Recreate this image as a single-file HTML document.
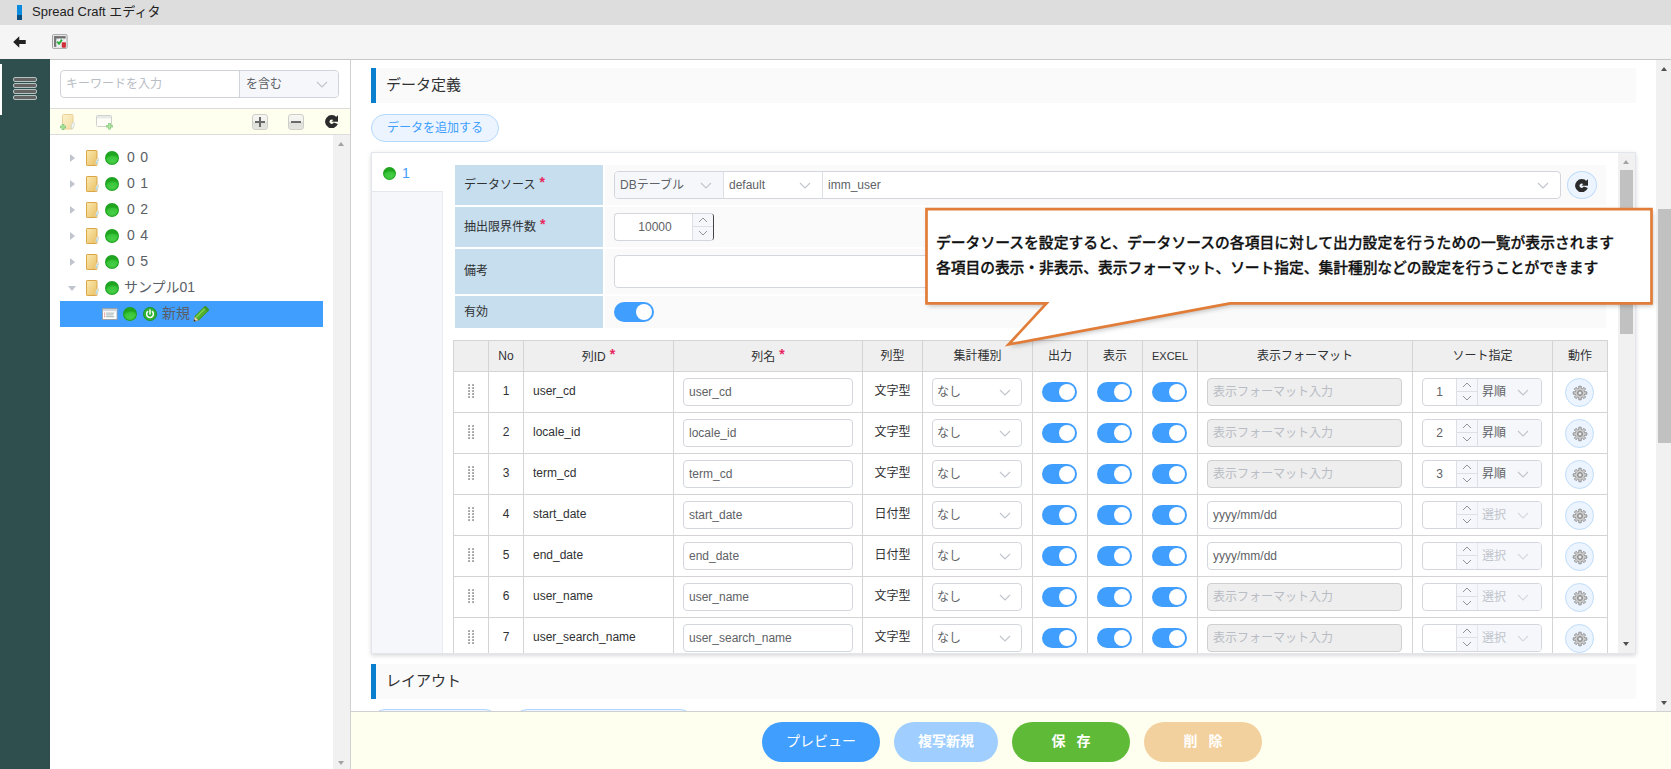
<!DOCTYPE html>
<html lang="ja">
<head>
<meta charset="utf-8">
<title>Spread Craft エディタ</title>
<style>
*{box-sizing:border-box;margin:0;padding:0}
html,body{width:1671px;height:769px;overflow:hidden;background:#fff}
body{position:relative;font-family:"Liberation Sans","Noto Sans CJK JP",sans-serif;font-size:12px;color:#333}
.abs{position:absolute}
#titlebar{position:absolute;left:0;top:0;width:1671px;height:25px;background:#dddddd}
#titlebar .mark{position:absolute;left:17px;top:5px;width:5px;height:15px;background:linear-gradient(#0a8be0 0,#0a8be0 66%,#0b4f7e 66%,#0b4f7e 100%)}
#titlebar .ttl{position:absolute;left:32px;top:0;height:25px;line-height:23px;font-size:13px;color:#222;white-space:nowrap}
#toolbar{position:absolute;left:0;top:25px;width:1671px;height:35px;background:#f5f5f5;border-bottom:1px solid #c6c6c6}
#sidebar{position:absolute;left:0;top:59px;width:50px;height:710px;background:#2f4f4f}
#sidebar .act{position:absolute;left:0;top:5px;width:2px;height:51px;background:#fff}
#sidebar .bar{position:absolute;left:13px;width:24px;height:5px;border:1px solid #b5c2c2;border-radius:2px;background:#636363}
#left{position:absolute;left:50px;top:60px;width:301px;height:709px;background:#fff;border-right:1px solid #d0d0d0}
#main{position:absolute;left:351px;top:60px;width:1320px;height:709px;background:#fff;overflow:hidden}

#search{position:absolute;left:10px;top:10px;width:279px;height:28px;border:1px solid #d0d3d9;border-radius:4px;background:#fff;overflow:hidden}
#search .ph{position:absolute;left:5px;top:0;line-height:27px;font-size:12px;color:#b9bdc5;white-space:nowrap}
#search .sel{position:absolute;left:178px;top:0;width:100px;height:26px;background:#f5f7fa;border-left:1px solid #d0d3d9;line-height:27px;font-size:12px;color:#606266;padding-left:6px}
.chev{position:absolute;width:12px;height:7px}
#ttool{position:absolute;left:0;top:48px;width:300px;height:27px;background:#fffff0;border-top:1px solid #dcdcdc;border-bottom:1px solid #dcdcdc}
.sqbtn{position:absolute;top:5px;width:16px;height:16px;border:1px solid #cfcfc8;border-radius:3px;background:linear-gradient(#f6f6f2 0,#f0f0ec 50%,#dededa 51%,#e4e4e0 100%)}
.sqbtn i{position:absolute;background:#6a6a6a}
#tree{position:absolute;left:0;top:76px;width:283px;height:634px;background:#fff}
#tscroll{position:absolute;left:283px;top:75px;width:17px;height:634px;background:#f1f1f1}
.tri-up{position:absolute;width:0;height:0;border-left:3.5px solid transparent;border-right:3.5px solid transparent;border-bottom:4px solid #a3a3a3}
.tri-dn{position:absolute;width:0;height:0;border-left:3.5px solid transparent;border-right:3.5px solid transparent;border-top:4px solid #a3a3a3}
.trow{position:absolute;left:0;width:283px;height:26px;line-height:25px;font-size:14px;color:#5a5e66;white-space:nowrap}
.trow .arr{position:absolute;left:20px;top:9px;width:0;height:0;border-top:4px solid transparent;border-bottom:4px solid transparent;border-left:5px solid #c0c4cc}
.trow .arrd{position:absolute;left:18px;top:11px;width:0;height:0;border-left:4px solid transparent;border-right:4px solid transparent;border-top:5px solid #c0c4cc}
.trow .fold{position:absolute;left:36px;top:5px;width:13px;height:16px}
.gdot{position:absolute;width:14px;height:14px;border-radius:50%;background:radial-gradient(ellipse 62% 42% at 56% 70%,#48cf48 0,#38c438 70%,rgba(56,196,56,0) 100%),#1fa61f;box-shadow:inset 0 0 0 1px #1f9f1f}
.trow .gdot{left:55px;top:6px}
.trow .lbl{position:absolute;left:77px;top:0}
#mo{position:absolute;left:-351px;top:-60px;width:1671px;height:769px}
/*MAINCSS*/
.sec{position:absolute;left:371px;width:1265px;height:35px;background:#fafafa;border-left:5px solid #0a7fce;padding-left:10px;line-height:34px;font-size:15px;color:#303133}
.pill{position:absolute;height:28px;border:1px solid #b3d8ff;border-radius:14px;background:#ecf5ff;color:#409eff;font-size:12px;line-height:26px;text-align:center;white-space:nowrap}
#card{position:absolute;left:371px;top:152px;width:1265px;height:502px;background:#fff;border:1px solid #e2e5eb;box-shadow:0 2px 4px 0 rgba(0,0,0,.12),0 0 6px 0 rgba(0,0,0,.04);overflow:hidden}
#ci{position:absolute;left:-372px;top:-153px;width:1671px;height:769px}
#tabcol{position:absolute;left:372px;top:153px;width:71px;height:500px;background:#f5f7fa;border-right:1px solid #e9ebf0}
#tab1{position:absolute;left:372px;top:153px;width:71px;height:39px;background:#fff;border-bottom:1px solid #e4e7ed;color:#409eff;font-size:14px;line-height:40px}
.flab{position:absolute;left:455px;width:148px;background:#c6deed;color:#303133;font-size:12px;padding-left:9px;white-space:nowrap}
.fval{position:absolute;left:605px;width:1001px;background:#fafafa}
.req{color:#e8265e;font-size:14px;font-weight:bold;position:relative;top:-2px;margin-left:4px}
.inp{position:absolute;height:28px;border:1px solid #d3d6dc;border-radius:4px;background:#fff;color:#606266;font-size:12px;line-height:26px;padding-left:6px;white-space:nowrap;overflow:hidden}
.inp.dis{background:#eeeeee;border-color:#cfcfcf;color:#b9bcc4}
.sw{position:absolute;height:20px;border-radius:10px;background:#409eff}
.sw:after{content:"";position:absolute;right:2px;top:2px;width:16px;height:16px;border-radius:50%;background:#fff}
.cv{position:absolute;width:12px;height:7px}
.spin{position:absolute;top:0;right:0;width:21px;height:26px;background:#f5f7fa;border-left:1px solid #dcdfe6}
.spin:before{content:"";position:absolute;left:0;top:12px;width:20px;height:1px;background:#dcdfe6}
.spin svg{position:absolute;left:5px;width:10px;height:6px}
#grid{position:absolute;left:453px;top:340px;width:1155px;height:330px;border-left:1px solid #d4d4d4;border-top:1px solid #d4d4d4}
.gh{position:absolute;top:0;height:31px;background:#efefef;border-right:1px solid #d4d4d4;border-bottom:1px solid #d4d4d4;text-align:center;line-height:30px;font-size:12px;color:#303133;white-space:nowrap}
.gc{position:absolute;height:41px;background:#fff;border-right:1px solid #d4d4d4;border-bottom:1px solid #d4d4d4;line-height:38px;font-size:12px;color:#303133;white-space:nowrap}
.gc.c{text-align:center}
.grip{position:absolute;left:14px;top:12px;width:6px;height:14px}
.gear{position:absolute;left:12px;top:6px;width:29px;height:29px;border-radius:50%;background:#ecf5ff;border:1px solid #c0dcfa}
.gear svg{position:absolute;left:5.500px;top:6px;width:16px;height:16px}
#iscroll{position:absolute;left:1618px;top:153px;width:17px;height:500px;background:#f1f1f1}
#iscroll .th{position:absolute;left:2px;top:17px;width:13px;height:164px;background:#c1c1c1}
#oscroll{position:absolute;left:1656px;top:60px;width:15px;height:651px;background:#f1f1f1}
#oscroll .th{position:absolute;left:2px;top:149px;width:13px;height:234px;background:#c1c1c1}
.tu{position:absolute;width:0;height:0;border-left:3.5px solid transparent;border-right:3.5px solid transparent;border-bottom:4px solid #505050}
.td{position:absolute;width:0;height:0;border-left:3.5px solid transparent;border-right:3.5px solid transparent;border-top:4px solid #505050}
#bbar{position:absolute;left:351px;top:711px;width:1320px;height:58px;background:#fffff0;border-top:1px solid #d0d0d0}
.bb{position:absolute;top:10px;height:40px;border-radius:20px;color:#fff;font-size:14px;line-height:38px;text-align:center;white-space:nowrap}
#callout{position:absolute;left:0;top:0;width:1671px;height:769px;pointer-events:none}
.ctxt{position:absolute;left:936px;font-size:14.8px;font-weight:500;-webkit-text-stroke:.28px #111;color:#111;white-space:nowrap;line-height:20px}
/*/MAINCSS*/
</style>
</head>
<body>
<div id="titlebar"><div class="mark"></div><div class="ttl">Spread Craft エディタ</div></div>
<div id="toolbar">
<svg class="abs" style="left:13px;top:11px" width="13.3" height="12" viewBox="0 0 14 13"><path d="M0 6.500 L6.600 0.300 V4.300 H13.600 V8.700 H6.600 V12.700 Z" fill="#222"/></svg>
<svg class="abs" style="left:52px;top:9px" width="15.600" height="15" viewBox="0 0 16 15"><rect x=".5" y=".5" width="15" height="14" rx=".8" fill="#f6f6f6" stroke="#9c9c9c"/><rect x="2" y="2" width="12" height="11" fill="#e4e9ec"/><rect x="2" y="2" width="12" height="2.400" fill="#6e6e6e"/><rect x="2" y="2" width="2.400" height="11" fill="#777"/><path d="M4.400 7 H14 M4.400 10 H14 M7.500 4.400 V13 M10.800 4.400 V13" stroke="#fff" stroke-width=".7"/><path d="M5.200 7.600 L7.200 9.800 L10.300 5.600" fill="none" stroke="#2fae3d" stroke-width="2"/><rect x="10" y="8.200" width="4.300" height="5.600" rx=".8" fill="#cf2f3a"/></svg>
</div>
<div id="sidebar"><div class="act"></div>
<div class="bar" style="top:18px"></div><div class="bar" style="top:24px"></div><div class="bar" style="top:30px"></div><div class="bar" style="top:36px"></div>
</div>
<div id="left">
<div id="search"><span class="ph">キーワードを入力</span><div class="sel">を含む<svg class="chev" style="left:76px;top:10px" viewBox="0 0 12 7"><path d="M1 1 L6 6 L11 1" fill="none" stroke="#c0c4cc" stroke-width="1.2"/></svg></div></div>
<div id="ttool">
<svg class="abs" style="left:9px;top:4px;opacity:.55" width="17" height="18" viewBox="0 0 17 18"><rect x="3.5" y="1.500" width="10.5" height="14.5" rx="1" fill="url(#fg)" stroke="#d9a94e"/><path d="M12.5 16 Q11.5 11.5 14.3 9.2 Q16 9.200 15.3 12 Q14.800 15 12.5 16Z" fill="#eaf2f6" stroke="#9fb3bd" stroke-width=".7"/><path d="M4 11 V17 M1 14 H7" stroke="#2a9a2a" stroke-width="2.600"/><path d="M4 11.8 V16.2 M1.8 14 H6.2" stroke="#6fdc5a" stroke-width="1"/></svg>
<svg class="abs" style="left:46px;top:6px;opacity:.55" width="18" height="15" viewBox="0 0 18 15"><rect x=".5" y=".5" width="15" height="11" rx="1" fill="#fff" stroke="#a9adb3"/><rect x="1" y="1" width="14" height="2.5" fill="#d5d9de"/><path d="M13.500 8 V14.5 M10.2 11.200 H16.8" stroke="#2a9a2a" stroke-width="2.600"/><path d="M13.5 8.800 V13.700 M11 11.200 H16" stroke="#6fdc5a" stroke-width="1"/></svg>
<div class="sqbtn" style="left:202px"><i style="left:2px;top:6px;width:10px;height:2px"></i><i style="left:6px;top:2px;width:2px;height:10px"></i></div>
<div class="sqbtn" style="left:238px"><i style="left:2px;top:6px;width:10px;height:2px"></i></div>
<svg class="abs" style="left:275px;top:6px" width="13.2" height="13.2" viewBox="0 0 13.2 13.2"><path d="M10.800 8.300 A4.400 4.400 0 1 1 10.100 3.900" fill="none" stroke="#2b2b2b" stroke-width="4.400"/><path d="M13.200 0 V6.500 H7 Z" fill="#2b2b2b" stroke="#2b2b2b" stroke-width=".4"/></svg>
</div>
<div id="tree">
<div class="trow" style="top:9px"><span class="arr"></span><svg class="fold" viewBox="0 0 13 16"><defs><linearGradient id="fg" x1="0" y1="0" x2="1" y2="1"><stop offset="0" stop-color="#fbe9b0"/><stop offset="1" stop-color="#e9bf63"/></linearGradient></defs><rect x="0.5" y="0.5" width="10.5" height="15" rx=".6" fill="url(#fg)" stroke="#dba648"/><path d="M9.8 15.200 Q9 10.5 11.5 8 Q13.200 8 12.500 11 Q12 14.200 9.800 15.200Z" fill="#f4f8fa" stroke="#e0c088" stroke-width=".5"/><path d="M10.600 14 Q10.400 11.500 11.800 9.800" fill="none" stroke="#8ccbe0" stroke-width=".9"/></svg><span class="gdot"></span><span class="lbl" style="word-spacing:1.5px">0 0</span></div>
<div class="trow" style="top:35px"><span class="arr"></span><svg class="fold" viewBox="0 0 13 16"><rect x="0.5" y="0.5" width="10.5" height="15" rx=".6" fill="url(#fg)" stroke="#dba648"/><path d="M9.8 15.200 Q9 10.5 11.5 8 Q13.200 8 12.500 11 Q12 14.200 9.800 15.200Z" fill="#f4f8fa" stroke="#e0c088" stroke-width=".5"/><path d="M10.600 14 Q10.400 11.500 11.800 9.800" fill="none" stroke="#8ccbe0" stroke-width=".9"/></svg><span class="gdot"></span><span class="lbl" style="word-spacing:1.5px">0 1</span></div>
<div class="trow" style="top:61px"><span class="arr"></span><svg class="fold" viewBox="0 0 13 16"><rect x="0.5" y="0.5" width="10.5" height="15" rx=".6" fill="url(#fg)" stroke="#dba648"/><path d="M9.8 15.200 Q9 10.5 11.5 8 Q13.200 8 12.500 11 Q12 14.200 9.800 15.200Z" fill="#f4f8fa" stroke="#e0c088" stroke-width=".5"/><path d="M10.600 14 Q10.400 11.500 11.800 9.800" fill="none" stroke="#8ccbe0" stroke-width=".9"/></svg><span class="gdot"></span><span class="lbl" style="word-spacing:1.5px">0 2</span></div>
<div class="trow" style="top:87px"><span class="arr"></span><svg class="fold" viewBox="0 0 13 16"><rect x="0.5" y="0.5" width="10.5" height="15" rx=".6" fill="url(#fg)" stroke="#dba648"/><path d="M9.8 15.200 Q9 10.5 11.5 8 Q13.200 8 12.500 11 Q12 14.200 9.800 15.200Z" fill="#f4f8fa" stroke="#e0c088" stroke-width=".5"/><path d="M10.600 14 Q10.400 11.500 11.800 9.800" fill="none" stroke="#8ccbe0" stroke-width=".9"/></svg><span class="gdot"></span><span class="lbl" style="word-spacing:1.5px">0 4</span></div>
<div class="trow" style="top:113px"><span class="arr"></span><svg class="fold" viewBox="0 0 13 16"><rect x="0.5" y="0.5" width="10.5" height="15" rx=".6" fill="url(#fg)" stroke="#dba648"/><path d="M9.8 15.200 Q9 10.5 11.5 8 Q13.200 8 12.500 11 Q12 14.200 9.800 15.200Z" fill="#f4f8fa" stroke="#e0c088" stroke-width=".5"/><path d="M10.600 14 Q10.400 11.500 11.800 9.800" fill="none" stroke="#8ccbe0" stroke-width=".9"/></svg><span class="gdot"></span><span class="lbl" style="word-spacing:1.5px">0 5</span></div>
<div class="trow" style="top:139px"><span class="arrd"></span><svg class="fold" viewBox="0 0 13 16"><rect x="0.5" y="0.5" width="10.5" height="15" rx=".6" fill="url(#fg)" stroke="#dba648"/><path d="M9.8 15.200 Q9 10.5 11.5 8 Q13.200 8 12.500 11 Q12 14.200 9.800 15.200Z" fill="#f4f8fa" stroke="#e0c088" stroke-width=".5"/><path d="M10.600 14 Q10.400 11.500 11.800 9.800" fill="none" stroke="#8ccbe0" stroke-width=".9"/></svg><span class="gdot"></span><span class="lbl" style="left:74px">サンプル01</span></div>
<div class="trow" style="top:165px;left:10px;width:263px;height:26px;background:#409eff">
<svg class="abs" style="left:42px;top:7px" width="15.500" height="12" viewBox="0 0 17 13"><rect x=".5" y=".5" width="16" height="12" fill="#fff" stroke="#9aa0a6"/><rect x="1" y="1" width="15" height="2.5" fill="#cfd4da"/><g fill="#c33"><rect x="2.5" y="5" width="1" height="1"/><rect x="2.5" y="7" width="1" height="1"/><rect x="2.5" y="9" width="1" height="1"/></g><g fill="#9aa"><rect x="4.5" y="5" width="9" height="1"/><rect x="4.5" y="7" width="8" height="1"/><rect x="4.5" y="9" width="9" height="1"/></g></svg>
<span class="gdot" style="left:63px;top:6px"></span>
<svg class="abs" style="left:83px;top:6px" width="14" height="14" viewBox="0 0 14 14"><circle cx="7" cy="7" r="6.6" fill="#2eb135" stroke="#1c8f25" stroke-width=".8"/><path d="M4.6 4.6 A3.4 3.4 0 1 0 9.4 4.6" fill="none" stroke="#fff" stroke-width="1.5" stroke-linecap="round"/><path d="M7 3 V7" stroke="#fff" stroke-width="1.5" stroke-linecap="round"/></svg>
<span class="lbl" style="left:102px;color:#5a5e66">新規</span>
<svg class="abs" style="left:133px;top:5px" width="17" height="16" viewBox="0 0 17 16"><path d="M0.800 15.400 L1.800 10.200 L5.800 14.200 Z" fill="#f0d9a8" stroke="#9a7b45" stroke-width=".5"/><path d="M0.800 15.400 L1.200 13.300 L2.900 15Z" fill="#222"/><path d="M1.800 10.200 L10.800 1.200 L14.800 5.200 L5.800 14.200Z" fill="#4fae2c" stroke="#3a8a1e" stroke-width=".6"/><path d="M3.100 11.500 L12.100 2.500" stroke="#7fd455" stroke-width="1.300"/><path d="M10.800 1.200 L11.600 .5 Q12.300 0 13 .600 L15.400 3 Q16 3.700 15.500 4.400 L14.800 5.200Z" fill="#3f9a22" stroke="#3a8a1e" stroke-width=".6"/></svg>
</div>
</div>
<div id="tscroll"><div class="tri-up" style="left:5px;top:7px"></div><div class="tri-dn" style="left:5px;top:626px"></div></div>
</div>
<div id="main"><div id="mo">
<!--MAIN-->
<div class="sec" style="top:68px">データ定義</div>
<div class="pill" style="left:371px;top:114px;width:128px">データを追加する</div>
<div id="card"><div id="ci">
<div id="tabcol"></div>
<div id="tab1"><span class="gdot" style="left:11px;top:14px;width:13px;height:13px"></span><span class="abs" style="left:30px;top:0">1</span></div>
<div class="flab" style="top:165px;height:40px;line-height:39px">データソース<span class="req">*</span></div><div class="fval" style="top:165px;height:40px"></div>
<div class="flab" style="top:207px;height:40px;line-height:39px">抽出限界件数<span class="req">*</span></div><div class="fval" style="top:207px;height:40px"></div>
<div class="flab" style="top:249px;height:45px;line-height:44px">備考</div><div class="fval" style="top:249px;height:45px"></div>
<div class="flab" style="top:296px;height:32px;line-height:33px">有効</div><div class="fval" style="top:296px;height:32px"></div>
<div class="inp" style="left:614px;top:171px;width:1px;height:1px;border:0"></div>
<div class="inp" style="left:614px;top:171px;width:947px;border-radius:4px"></div>
<div class="abs" style="left:615px;top:172px;width:109px;height:26px;background:#f5f7fa;border-right:1px solid #dcdfe6;border-radius:3px 0 0 3px;color:#606266;line-height:26px;padding-left:5px">DBテーブル</div><svg class="cv" style="left:700px;top:182px" viewBox="0 0 12 7"><path d="M1 1 L6 6 L11 1" fill="none" stroke="#c0c4cc" stroke-width="1.1"/></svg>
<div class="abs" style="left:724px;top:172px;width:99px;height:26px;border-right:1px solid #dcdfe6;color:#606266;line-height:26px;padding-left:5px">default</div><svg class="cv" style="left:799px;top:182px" viewBox="0 0 12 7"><path d="M1 1 L6 6 L11 1" fill="none" stroke="#c0c4cc" stroke-width="1.1"/></svg>
<div class="abs" style="left:828px;top:172px;height:26px;color:#606266;line-height:26px">imm_user</div><svg class="cv" style="left:1537px;top:182px" viewBox="0 0 12 7"><path d="M1 1 L6 6 L11 1" fill="none" stroke="#c0c4cc" stroke-width="1.1"/></svg>
<div class="abs" style="left:1567px;top:171px;width:30px;height:28px;border-radius:50%;background:#ecf5ff;border:1px solid #c0dcfa"><svg class="abs" style="left:7px;top:7px" width="13.2" height="13.2" viewBox="0 0 13.2 13.2"><path d="M10.800 8.300 A4.400 4.400 0 1 1 10.100 3.900" fill="none" stroke="#2b2b2b" stroke-width="4.400"/><path d="M13.200 0 V6.500 H7 Z" fill="#2b2b2b" stroke="#2b2b2b" stroke-width=".4"/></svg></div>
<div class="inp" style="left:614px;top:213px;width:100px;padding:0 20px 0 2px;text-align:center;border-right-color:#444">10000<div class="spin"><svg style="top:3px" viewBox="0 0 10 6"><path d="M1 5 L5 1 L9 5" fill="none" stroke="#909399" stroke-width="1"/></svg><svg style="top:16px" viewBox="0 0 10 6"><path d="M1 1 L5 5 L9 1" fill="none" stroke="#909399" stroke-width="1"/></svg></div></div>
<div class="inp" style="left:614px;top:255px;width:983px;height:33px"></div>
<div class="sw" style="left:614px;top:302px;width:40px"></div>
<div id="grid"><div class="gh" style="left:0px;width:35px"></div>
<div class="gh" style="left:35px;width:35px">No</div>
<div class="gh" style="left:70px;width:150px">列ID<span class="req">*</span></div>
<div class="gh" style="left:220px;width:189px">列名<span class="req">*</span></div>
<div class="gh" style="left:409px;width:60px">列型</div>
<div class="gh" style="left:469px;width:110px">集計種別</div>
<div class="gh" style="left:579px;width:55px">出力</div>
<div class="gh" style="left:634px;width:55px">表示</div>
<div class="gh" style="left:689px;width:55px;font-size:11px">EXCEL</div>
<div class="gh" style="left:744px;width:215px">表示フォーマット</div>
<div class="gh" style="left:959px;width:140px">ソート指定</div>
<div class="gh" style="left:1099px;width:55px">動作</div>
<div class="gc " style="left:0px;top:31px;width:35px"><svg class="grip" viewBox="0 0 6 14"><rect x="0.3" y="0.3" width="1.500" height="1.500" fill="#6e6e6e"/><rect x="0.3" y="3.3" width="1.500" height="1.500" fill="#6e6e6e"/><rect x="0.3" y="6.3" width="1.500" height="1.500" fill="#6e6e6e"/><rect x="0.3" y="9.3" width="1.500" height="1.500" fill="#6e6e6e"/><rect x="0.3" y="12.3" width="1.500" height="1.500" fill="#6e6e6e"/><rect x="4.3" y="0.3" width="1.500" height="1.500" fill="#6e6e6e"/><rect x="4.3" y="3.3" width="1.500" height="1.500" fill="#6e6e6e"/><rect x="4.3" y="6.3" width="1.500" height="1.500" fill="#6e6e6e"/><rect x="4.3" y="9.3" width="1.500" height="1.500" fill="#6e6e6e"/><rect x="4.3" y="12.3" width="1.500" height="1.500" fill="#6e6e6e"/></svg></div>
<div class="gc c" style="left:35px;top:31px;width:35px">1</div>
<div class="gc " style="left:70px;top:31px;width:150px"><span style="padding-left:9px">user_cd</span></div>
<div class="gc " style="left:220px;top:31px;width:189px"><div class="inp" style="left:9px;top:6px;width:170px;padding-left:5px">user_cd</div></div>
<div class="gc c" style="left:409px;top:31px;width:60px">文字型</div>
<div class="gc " style="left:469px;top:31px;width:110px"><div class="inp" style="left:9px;top:6px;width:90px;padding-left:4px">なし<svg class="cv" style="left:66px;top:10px" viewBox="0 0 12 7"><path d="M1 1 L6 6 L11 1" fill="none" stroke="#c0c4cc" stroke-width="1.1"/></svg></div></div>
<div class="gc " style="left:579px;top:31px;width:55px"><div class="sw" style="left:9px;top:10px;width:35px"></div></div>
<div class="gc " style="left:634px;top:31px;width:55px"><div class="sw" style="left:9px;top:10px;width:35px"></div></div>
<div class="gc " style="left:689px;top:31px;width:55px"><div class="sw" style="left:9px;top:10px;width:35px"></div></div>
<div class="gc " style="left:744px;top:31px;width:215px"><div class="inp dis" style="left:9px;top:6px;width:195px;padding-left:5px">表示フォーマット入力</div></div>
<div class="gc " style="left:959px;top:31px;width:140px"><div class="inp" style="left:9px;top:6px;width:120px;padding:0"><div class="abs" style="left:0;top:0;width:33px;height:26px;text-align:center;line-height:26px">1</div><div class="abs" style="left:33px;top:0;width:21px;height:26px"><div class="spin"><svg style="top:3px" viewBox="0 0 10 6"><path d="M1 5 L5 1 L9 5" fill="none" stroke="#909399" stroke-width="1"/></svg><svg style="top:16px" viewBox="0 0 10 6"><path d="M1 1 L5 5 L9 1" fill="none" stroke="#909399" stroke-width="1"/></svg></div></div><div class="abs" style="left:54px;top:0;width:64px;height:26px;background:#f5f7fa;border-left:1px solid #dcdfe6;line-height:26px;color:#606266;padding-left:4px;text-align:left">昇順<svg class="cv" style="left:39px;top:10px" viewBox="0 0 12 7"><path d="M1 1 L6 6 L11 1" fill="none" stroke="#c0c4cc" stroke-width="1.1"/></svg></div></div></div>
<div class="gc " style="left:1099px;top:31px;width:55px"><div class="gear"><svg viewBox="0 0 16 16"><path d="M6.76 3.36 L6.80 1.20 L9.20 1.20 L9.24 3.36 L10.40 3.84 L11.96 2.35 L13.65 4.04 L12.16 5.60 L12.64 6.76 L14.80 6.80 L14.80 9.20 L12.64 9.24 L12.16 10.40 L13.65 11.96 L11.96 13.65 L10.40 12.16 L9.24 12.64 L9.20 14.80 L6.80 14.80 L6.76 12.640 L5.60 12.16 L4.04 13.65 L2.35 11.96 L3.84 10.40 L3.36 9.24 L1.20 9.20 L1.20 6.80 L3.36 6.76 L3.84 5.60 L2.35 4.04 L4.04 2.35 L5.60 3.84Z" fill="#cdcdcd" stroke="#8b8b8b" stroke-width=".9" stroke-linejoin="round"/><circle cx="8" cy="8" r="2.5" fill="#b5b5b5" stroke="#858585" stroke-width=".9"/><circle cx="8" cy="8" r="1.1" fill="#f4f7fb"/></svg></div></div>
<div class="gc " style="left:0px;top:72px;width:35px"><svg class="grip" viewBox="0 0 6 14"><rect x="0.3" y="0.3" width="1.500" height="1.500" fill="#6e6e6e"/><rect x="0.3" y="3.3" width="1.500" height="1.500" fill="#6e6e6e"/><rect x="0.3" y="6.3" width="1.500" height="1.500" fill="#6e6e6e"/><rect x="0.3" y="9.3" width="1.500" height="1.500" fill="#6e6e6e"/><rect x="0.3" y="12.3" width="1.500" height="1.500" fill="#6e6e6e"/><rect x="4.3" y="0.3" width="1.500" height="1.500" fill="#6e6e6e"/><rect x="4.3" y="3.3" width="1.500" height="1.500" fill="#6e6e6e"/><rect x="4.3" y="6.3" width="1.500" height="1.500" fill="#6e6e6e"/><rect x="4.3" y="9.3" width="1.500" height="1.500" fill="#6e6e6e"/><rect x="4.3" y="12.3" width="1.500" height="1.500" fill="#6e6e6e"/></svg></div>
<div class="gc c" style="left:35px;top:72px;width:35px">2</div>
<div class="gc " style="left:70px;top:72px;width:150px"><span style="padding-left:9px">locale_id</span></div>
<div class="gc " style="left:220px;top:72px;width:189px"><div class="inp" style="left:9px;top:6px;width:170px;padding-left:5px">locale_id</div></div>
<div class="gc c" style="left:409px;top:72px;width:60px">文字型</div>
<div class="gc " style="left:469px;top:72px;width:110px"><div class="inp" style="left:9px;top:6px;width:90px;padding-left:4px">なし<svg class="cv" style="left:66px;top:10px" viewBox="0 0 12 7"><path d="M1 1 L6 6 L11 1" fill="none" stroke="#c0c4cc" stroke-width="1.1"/></svg></div></div>
<div class="gc " style="left:579px;top:72px;width:55px"><div class="sw" style="left:9px;top:10px;width:35px"></div></div>
<div class="gc " style="left:634px;top:72px;width:55px"><div class="sw" style="left:9px;top:10px;width:35px"></div></div>
<div class="gc " style="left:689px;top:72px;width:55px"><div class="sw" style="left:9px;top:10px;width:35px"></div></div>
<div class="gc " style="left:744px;top:72px;width:215px"><div class="inp dis" style="left:9px;top:6px;width:195px;padding-left:5px">表示フォーマット入力</div></div>
<div class="gc " style="left:959px;top:72px;width:140px"><div class="inp" style="left:9px;top:6px;width:120px;padding:0"><div class="abs" style="left:0;top:0;width:33px;height:26px;text-align:center;line-height:26px">2</div><div class="abs" style="left:33px;top:0;width:21px;height:26px"><div class="spin"><svg style="top:3px" viewBox="0 0 10 6"><path d="M1 5 L5 1 L9 5" fill="none" stroke="#909399" stroke-width="1"/></svg><svg style="top:16px" viewBox="0 0 10 6"><path d="M1 1 L5 5 L9 1" fill="none" stroke="#909399" stroke-width="1"/></svg></div></div><div class="abs" style="left:54px;top:0;width:64px;height:26px;background:#f5f7fa;border-left:1px solid #dcdfe6;line-height:26px;color:#606266;padding-left:4px;text-align:left">昇順<svg class="cv" style="left:39px;top:10px" viewBox="0 0 12 7"><path d="M1 1 L6 6 L11 1" fill="none" stroke="#c0c4cc" stroke-width="1.1"/></svg></div></div></div>
<div class="gc " style="left:1099px;top:72px;width:55px"><div class="gear"><svg viewBox="0 0 16 16"><path d="M6.76 3.36 L6.80 1.20 L9.20 1.20 L9.24 3.36 L10.40 3.84 L11.96 2.35 L13.65 4.04 L12.16 5.60 L12.64 6.76 L14.80 6.80 L14.80 9.20 L12.64 9.24 L12.16 10.40 L13.65 11.96 L11.96 13.65 L10.40 12.16 L9.24 12.64 L9.20 14.80 L6.80 14.80 L6.76 12.640 L5.60 12.16 L4.04 13.65 L2.35 11.96 L3.84 10.40 L3.36 9.24 L1.20 9.20 L1.20 6.80 L3.36 6.76 L3.84 5.60 L2.35 4.04 L4.04 2.35 L5.60 3.84Z" fill="#cdcdcd" stroke="#8b8b8b" stroke-width=".9" stroke-linejoin="round"/><circle cx="8" cy="8" r="2.5" fill="#b5b5b5" stroke="#858585" stroke-width=".9"/><circle cx="8" cy="8" r="1.1" fill="#f4f7fb"/></svg></div></div>
<div class="gc " style="left:0px;top:113px;width:35px"><svg class="grip" viewBox="0 0 6 14"><rect x="0.3" y="0.3" width="1.500" height="1.500" fill="#6e6e6e"/><rect x="0.3" y="3.3" width="1.500" height="1.500" fill="#6e6e6e"/><rect x="0.3" y="6.3" width="1.500" height="1.500" fill="#6e6e6e"/><rect x="0.3" y="9.3" width="1.500" height="1.500" fill="#6e6e6e"/><rect x="0.3" y="12.3" width="1.500" height="1.500" fill="#6e6e6e"/><rect x="4.3" y="0.3" width="1.500" height="1.500" fill="#6e6e6e"/><rect x="4.3" y="3.3" width="1.500" height="1.500" fill="#6e6e6e"/><rect x="4.3" y="6.3" width="1.500" height="1.500" fill="#6e6e6e"/><rect x="4.3" y="9.3" width="1.500" height="1.500" fill="#6e6e6e"/><rect x="4.3" y="12.3" width="1.500" height="1.500" fill="#6e6e6e"/></svg></div>
<div class="gc c" style="left:35px;top:113px;width:35px">3</div>
<div class="gc " style="left:70px;top:113px;width:150px"><span style="padding-left:9px">term_cd</span></div>
<div class="gc " style="left:220px;top:113px;width:189px"><div class="inp" style="left:9px;top:6px;width:170px;padding-left:5px">term_cd</div></div>
<div class="gc c" style="left:409px;top:113px;width:60px">文字型</div>
<div class="gc " style="left:469px;top:113px;width:110px"><div class="inp" style="left:9px;top:6px;width:90px;padding-left:4px">なし<svg class="cv" style="left:66px;top:10px" viewBox="0 0 12 7"><path d="M1 1 L6 6 L11 1" fill="none" stroke="#c0c4cc" stroke-width="1.1"/></svg></div></div>
<div class="gc " style="left:579px;top:113px;width:55px"><div class="sw" style="left:9px;top:10px;width:35px"></div></div>
<div class="gc " style="left:634px;top:113px;width:55px"><div class="sw" style="left:9px;top:10px;width:35px"></div></div>
<div class="gc " style="left:689px;top:113px;width:55px"><div class="sw" style="left:9px;top:10px;width:35px"></div></div>
<div class="gc " style="left:744px;top:113px;width:215px"><div class="inp dis" style="left:9px;top:6px;width:195px;padding-left:5px">表示フォーマット入力</div></div>
<div class="gc " style="left:959px;top:113px;width:140px"><div class="inp" style="left:9px;top:6px;width:120px;padding:0"><div class="abs" style="left:0;top:0;width:33px;height:26px;text-align:center;line-height:26px">3</div><div class="abs" style="left:33px;top:0;width:21px;height:26px"><div class="spin"><svg style="top:3px" viewBox="0 0 10 6"><path d="M1 5 L5 1 L9 5" fill="none" stroke="#909399" stroke-width="1"/></svg><svg style="top:16px" viewBox="0 0 10 6"><path d="M1 1 L5 5 L9 1" fill="none" stroke="#909399" stroke-width="1"/></svg></div></div><div class="abs" style="left:54px;top:0;width:64px;height:26px;background:#f5f7fa;border-left:1px solid #dcdfe6;line-height:26px;color:#606266;padding-left:4px;text-align:left">昇順<svg class="cv" style="left:39px;top:10px" viewBox="0 0 12 7"><path d="M1 1 L6 6 L11 1" fill="none" stroke="#c0c4cc" stroke-width="1.1"/></svg></div></div></div>
<div class="gc " style="left:1099px;top:113px;width:55px"><div class="gear"><svg viewBox="0 0 16 16"><path d="M6.76 3.36 L6.80 1.20 L9.20 1.20 L9.24 3.36 L10.40 3.84 L11.96 2.35 L13.65 4.04 L12.16 5.60 L12.64 6.76 L14.80 6.80 L14.80 9.20 L12.64 9.24 L12.16 10.40 L13.65 11.96 L11.96 13.65 L10.40 12.16 L9.24 12.64 L9.20 14.80 L6.80 14.80 L6.76 12.640 L5.60 12.16 L4.04 13.65 L2.35 11.96 L3.84 10.40 L3.36 9.24 L1.20 9.20 L1.20 6.80 L3.36 6.76 L3.84 5.60 L2.35 4.04 L4.04 2.35 L5.60 3.84Z" fill="#cdcdcd" stroke="#8b8b8b" stroke-width=".9" stroke-linejoin="round"/><circle cx="8" cy="8" r="2.5" fill="#b5b5b5" stroke="#858585" stroke-width=".9"/><circle cx="8" cy="8" r="1.1" fill="#f4f7fb"/></svg></div></div>
<div class="gc " style="left:0px;top:154px;width:35px"><svg class="grip" viewBox="0 0 6 14"><rect x="0.3" y="0.3" width="1.500" height="1.500" fill="#6e6e6e"/><rect x="0.3" y="3.3" width="1.500" height="1.500" fill="#6e6e6e"/><rect x="0.3" y="6.3" width="1.500" height="1.500" fill="#6e6e6e"/><rect x="0.3" y="9.3" width="1.500" height="1.500" fill="#6e6e6e"/><rect x="0.3" y="12.3" width="1.500" height="1.500" fill="#6e6e6e"/><rect x="4.3" y="0.3" width="1.500" height="1.500" fill="#6e6e6e"/><rect x="4.3" y="3.3" width="1.500" height="1.500" fill="#6e6e6e"/><rect x="4.3" y="6.3" width="1.500" height="1.500" fill="#6e6e6e"/><rect x="4.3" y="9.3" width="1.500" height="1.500" fill="#6e6e6e"/><rect x="4.3" y="12.3" width="1.500" height="1.500" fill="#6e6e6e"/></svg></div>
<div class="gc c" style="left:35px;top:154px;width:35px">4</div>
<div class="gc " style="left:70px;top:154px;width:150px"><span style="padding-left:9px">start_date</span></div>
<div class="gc " style="left:220px;top:154px;width:189px"><div class="inp" style="left:9px;top:6px;width:170px;padding-left:5px">start_date</div></div>
<div class="gc c" style="left:409px;top:154px;width:60px">日付型</div>
<div class="gc " style="left:469px;top:154px;width:110px"><div class="inp" style="left:9px;top:6px;width:90px;padding-left:4px">なし<svg class="cv" style="left:66px;top:10px" viewBox="0 0 12 7"><path d="M1 1 L6 6 L11 1" fill="none" stroke="#c0c4cc" stroke-width="1.1"/></svg></div></div>
<div class="gc " style="left:579px;top:154px;width:55px"><div class="sw" style="left:9px;top:10px;width:35px"></div></div>
<div class="gc " style="left:634px;top:154px;width:55px"><div class="sw" style="left:9px;top:10px;width:35px"></div></div>
<div class="gc " style="left:689px;top:154px;width:55px"><div class="sw" style="left:9px;top:10px;width:35px"></div></div>
<div class="gc " style="left:744px;top:154px;width:215px"><div class="inp" style="left:9px;top:6px;width:195px;padding-left:5px">yyyy/mm/dd</div></div>
<div class="gc " style="left:959px;top:154px;width:140px"><div class="inp" style="left:9px;top:6px;width:120px;padding:0"><div class="abs" style="left:0;top:0;width:33px;height:26px;text-align:center;line-height:26px"></div><div class="abs" style="left:33px;top:0;width:21px;height:26px"><div class="spin"><svg style="top:3px" viewBox="0 0 10 6"><path d="M1 5 L5 1 L9 5" fill="none" stroke="#909399" stroke-width="1"/></svg><svg style="top:16px" viewBox="0 0 10 6"><path d="M1 1 L5 5 L9 1" fill="none" stroke="#909399" stroke-width="1"/></svg></div></div><div class="abs" style="left:54px;top:0;width:64px;height:26px;background:#f5f7fa;border-left:1px solid #e4e7ed;line-height:26px;color:#c0c4cc;padding-left:4px;text-align:left">選択<svg class="cv" style="left:39px;top:10px" viewBox="0 0 12 7"><path d="M1 1 L6 6 L11 1" fill="none" stroke="#d5d8de" stroke-width="1.1"/></svg></div></div></div>
<div class="gc " style="left:1099px;top:154px;width:55px"><div class="gear"><svg viewBox="0 0 16 16"><path d="M6.76 3.36 L6.80 1.20 L9.20 1.20 L9.24 3.36 L10.40 3.84 L11.96 2.35 L13.65 4.04 L12.16 5.60 L12.64 6.76 L14.80 6.80 L14.80 9.20 L12.64 9.24 L12.16 10.40 L13.65 11.96 L11.96 13.65 L10.40 12.16 L9.24 12.64 L9.20 14.80 L6.80 14.80 L6.76 12.640 L5.60 12.16 L4.04 13.65 L2.35 11.96 L3.84 10.40 L3.36 9.24 L1.20 9.20 L1.20 6.80 L3.36 6.76 L3.84 5.60 L2.35 4.04 L4.04 2.35 L5.60 3.84Z" fill="#cdcdcd" stroke="#8b8b8b" stroke-width=".9" stroke-linejoin="round"/><circle cx="8" cy="8" r="2.5" fill="#b5b5b5" stroke="#858585" stroke-width=".9"/><circle cx="8" cy="8" r="1.1" fill="#f4f7fb"/></svg></div></div>
<div class="gc " style="left:0px;top:195px;width:35px"><svg class="grip" viewBox="0 0 6 14"><rect x="0.3" y="0.3" width="1.500" height="1.500" fill="#6e6e6e"/><rect x="0.3" y="3.3" width="1.500" height="1.500" fill="#6e6e6e"/><rect x="0.3" y="6.3" width="1.500" height="1.500" fill="#6e6e6e"/><rect x="0.3" y="9.3" width="1.500" height="1.500" fill="#6e6e6e"/><rect x="0.3" y="12.3" width="1.500" height="1.500" fill="#6e6e6e"/><rect x="4.3" y="0.3" width="1.500" height="1.500" fill="#6e6e6e"/><rect x="4.3" y="3.3" width="1.500" height="1.500" fill="#6e6e6e"/><rect x="4.3" y="6.3" width="1.500" height="1.500" fill="#6e6e6e"/><rect x="4.3" y="9.3" width="1.500" height="1.500" fill="#6e6e6e"/><rect x="4.3" y="12.3" width="1.500" height="1.500" fill="#6e6e6e"/></svg></div>
<div class="gc c" style="left:35px;top:195px;width:35px">5</div>
<div class="gc " style="left:70px;top:195px;width:150px"><span style="padding-left:9px">end_date</span></div>
<div class="gc " style="left:220px;top:195px;width:189px"><div class="inp" style="left:9px;top:6px;width:170px;padding-left:5px">end_date</div></div>
<div class="gc c" style="left:409px;top:195px;width:60px">日付型</div>
<div class="gc " style="left:469px;top:195px;width:110px"><div class="inp" style="left:9px;top:6px;width:90px;padding-left:4px">なし<svg class="cv" style="left:66px;top:10px" viewBox="0 0 12 7"><path d="M1 1 L6 6 L11 1" fill="none" stroke="#c0c4cc" stroke-width="1.1"/></svg></div></div>
<div class="gc " style="left:579px;top:195px;width:55px"><div class="sw" style="left:9px;top:10px;width:35px"></div></div>
<div class="gc " style="left:634px;top:195px;width:55px"><div class="sw" style="left:9px;top:10px;width:35px"></div></div>
<div class="gc " style="left:689px;top:195px;width:55px"><div class="sw" style="left:9px;top:10px;width:35px"></div></div>
<div class="gc " style="left:744px;top:195px;width:215px"><div class="inp" style="left:9px;top:6px;width:195px;padding-left:5px">yyyy/mm/dd</div></div>
<div class="gc " style="left:959px;top:195px;width:140px"><div class="inp" style="left:9px;top:6px;width:120px;padding:0"><div class="abs" style="left:0;top:0;width:33px;height:26px;text-align:center;line-height:26px"></div><div class="abs" style="left:33px;top:0;width:21px;height:26px"><div class="spin"><svg style="top:3px" viewBox="0 0 10 6"><path d="M1 5 L5 1 L9 5" fill="none" stroke="#909399" stroke-width="1"/></svg><svg style="top:16px" viewBox="0 0 10 6"><path d="M1 1 L5 5 L9 1" fill="none" stroke="#909399" stroke-width="1"/></svg></div></div><div class="abs" style="left:54px;top:0;width:64px;height:26px;background:#f5f7fa;border-left:1px solid #e4e7ed;line-height:26px;color:#c0c4cc;padding-left:4px;text-align:left">選択<svg class="cv" style="left:39px;top:10px" viewBox="0 0 12 7"><path d="M1 1 L6 6 L11 1" fill="none" stroke="#d5d8de" stroke-width="1.1"/></svg></div></div></div>
<div class="gc " style="left:1099px;top:195px;width:55px"><div class="gear"><svg viewBox="0 0 16 16"><path d="M6.76 3.36 L6.80 1.20 L9.20 1.20 L9.24 3.36 L10.40 3.84 L11.96 2.35 L13.65 4.04 L12.16 5.60 L12.64 6.76 L14.80 6.80 L14.80 9.20 L12.64 9.24 L12.16 10.40 L13.65 11.96 L11.96 13.65 L10.40 12.16 L9.24 12.64 L9.20 14.80 L6.80 14.80 L6.76 12.640 L5.60 12.16 L4.04 13.65 L2.35 11.96 L3.84 10.40 L3.36 9.24 L1.20 9.20 L1.20 6.80 L3.36 6.76 L3.84 5.60 L2.35 4.04 L4.04 2.35 L5.60 3.84Z" fill="#cdcdcd" stroke="#8b8b8b" stroke-width=".9" stroke-linejoin="round"/><circle cx="8" cy="8" r="2.5" fill="#b5b5b5" stroke="#858585" stroke-width=".9"/><circle cx="8" cy="8" r="1.1" fill="#f4f7fb"/></svg></div></div>
<div class="gc " style="left:0px;top:236px;width:35px"><svg class="grip" viewBox="0 0 6 14"><rect x="0.3" y="0.3" width="1.500" height="1.500" fill="#6e6e6e"/><rect x="0.3" y="3.3" width="1.500" height="1.500" fill="#6e6e6e"/><rect x="0.3" y="6.3" width="1.500" height="1.500" fill="#6e6e6e"/><rect x="0.3" y="9.3" width="1.500" height="1.500" fill="#6e6e6e"/><rect x="0.3" y="12.3" width="1.500" height="1.500" fill="#6e6e6e"/><rect x="4.3" y="0.3" width="1.500" height="1.500" fill="#6e6e6e"/><rect x="4.3" y="3.3" width="1.500" height="1.500" fill="#6e6e6e"/><rect x="4.3" y="6.3" width="1.500" height="1.500" fill="#6e6e6e"/><rect x="4.3" y="9.3" width="1.500" height="1.500" fill="#6e6e6e"/><rect x="4.3" y="12.3" width="1.500" height="1.500" fill="#6e6e6e"/></svg></div>
<div class="gc c" style="left:35px;top:236px;width:35px">6</div>
<div class="gc " style="left:70px;top:236px;width:150px"><span style="padding-left:9px">user_name</span></div>
<div class="gc " style="left:220px;top:236px;width:189px"><div class="inp" style="left:9px;top:6px;width:170px;padding-left:5px">user_name</div></div>
<div class="gc c" style="left:409px;top:236px;width:60px">文字型</div>
<div class="gc " style="left:469px;top:236px;width:110px"><div class="inp" style="left:9px;top:6px;width:90px;padding-left:4px">なし<svg class="cv" style="left:66px;top:10px" viewBox="0 0 12 7"><path d="M1 1 L6 6 L11 1" fill="none" stroke="#c0c4cc" stroke-width="1.1"/></svg></div></div>
<div class="gc " style="left:579px;top:236px;width:55px"><div class="sw" style="left:9px;top:10px;width:35px"></div></div>
<div class="gc " style="left:634px;top:236px;width:55px"><div class="sw" style="left:9px;top:10px;width:35px"></div></div>
<div class="gc " style="left:689px;top:236px;width:55px"><div class="sw" style="left:9px;top:10px;width:35px"></div></div>
<div class="gc " style="left:744px;top:236px;width:215px"><div class="inp dis" style="left:9px;top:6px;width:195px;padding-left:5px">表示フォーマット入力</div></div>
<div class="gc " style="left:959px;top:236px;width:140px"><div class="inp" style="left:9px;top:6px;width:120px;padding:0"><div class="abs" style="left:0;top:0;width:33px;height:26px;text-align:center;line-height:26px"></div><div class="abs" style="left:33px;top:0;width:21px;height:26px"><div class="spin"><svg style="top:3px" viewBox="0 0 10 6"><path d="M1 5 L5 1 L9 5" fill="none" stroke="#909399" stroke-width="1"/></svg><svg style="top:16px" viewBox="0 0 10 6"><path d="M1 1 L5 5 L9 1" fill="none" stroke="#909399" stroke-width="1"/></svg></div></div><div class="abs" style="left:54px;top:0;width:64px;height:26px;background:#f5f7fa;border-left:1px solid #e4e7ed;line-height:26px;color:#c0c4cc;padding-left:4px;text-align:left">選択<svg class="cv" style="left:39px;top:10px" viewBox="0 0 12 7"><path d="M1 1 L6 6 L11 1" fill="none" stroke="#d5d8de" stroke-width="1.1"/></svg></div></div></div>
<div class="gc " style="left:1099px;top:236px;width:55px"><div class="gear"><svg viewBox="0 0 16 16"><path d="M6.76 3.36 L6.80 1.20 L9.20 1.20 L9.24 3.36 L10.40 3.84 L11.96 2.35 L13.65 4.04 L12.16 5.60 L12.64 6.76 L14.80 6.80 L14.80 9.20 L12.64 9.24 L12.16 10.40 L13.65 11.96 L11.96 13.65 L10.40 12.16 L9.24 12.64 L9.20 14.80 L6.80 14.80 L6.76 12.640 L5.60 12.16 L4.04 13.65 L2.35 11.96 L3.84 10.40 L3.36 9.24 L1.20 9.20 L1.20 6.80 L3.36 6.76 L3.84 5.60 L2.35 4.04 L4.04 2.35 L5.60 3.84Z" fill="#cdcdcd" stroke="#8b8b8b" stroke-width=".9" stroke-linejoin="round"/><circle cx="8" cy="8" r="2.5" fill="#b5b5b5" stroke="#858585" stroke-width=".9"/><circle cx="8" cy="8" r="1.1" fill="#f4f7fb"/></svg></div></div>
<div class="gc " style="left:0px;top:277px;width:35px"><svg class="grip" viewBox="0 0 6 14"><rect x="0.3" y="0.3" width="1.500" height="1.500" fill="#6e6e6e"/><rect x="0.3" y="3.3" width="1.500" height="1.500" fill="#6e6e6e"/><rect x="0.3" y="6.3" width="1.500" height="1.500" fill="#6e6e6e"/><rect x="0.3" y="9.3" width="1.500" height="1.500" fill="#6e6e6e"/><rect x="0.3" y="12.3" width="1.500" height="1.500" fill="#6e6e6e"/><rect x="4.3" y="0.3" width="1.500" height="1.500" fill="#6e6e6e"/><rect x="4.3" y="3.3" width="1.500" height="1.500" fill="#6e6e6e"/><rect x="4.3" y="6.3" width="1.500" height="1.500" fill="#6e6e6e"/><rect x="4.3" y="9.3" width="1.500" height="1.500" fill="#6e6e6e"/><rect x="4.3" y="12.3" width="1.500" height="1.500" fill="#6e6e6e"/></svg></div>
<div class="gc c" style="left:35px;top:277px;width:35px">7</div>
<div class="gc " style="left:70px;top:277px;width:150px"><span style="padding-left:9px">user_search_name</span></div>
<div class="gc " style="left:220px;top:277px;width:189px"><div class="inp" style="left:9px;top:6px;width:170px;padding-left:5px">user_search_name</div></div>
<div class="gc c" style="left:409px;top:277px;width:60px">文字型</div>
<div class="gc " style="left:469px;top:277px;width:110px"><div class="inp" style="left:9px;top:6px;width:90px;padding-left:4px">なし<svg class="cv" style="left:66px;top:10px" viewBox="0 0 12 7"><path d="M1 1 L6 6 L11 1" fill="none" stroke="#c0c4cc" stroke-width="1.1"/></svg></div></div>
<div class="gc " style="left:579px;top:277px;width:55px"><div class="sw" style="left:9px;top:10px;width:35px"></div></div>
<div class="gc " style="left:634px;top:277px;width:55px"><div class="sw" style="left:9px;top:10px;width:35px"></div></div>
<div class="gc " style="left:689px;top:277px;width:55px"><div class="sw" style="left:9px;top:10px;width:35px"></div></div>
<div class="gc " style="left:744px;top:277px;width:215px"><div class="inp dis" style="left:9px;top:6px;width:195px;padding-left:5px">表示フォーマット入力</div></div>
<div class="gc " style="left:959px;top:277px;width:140px"><div class="inp" style="left:9px;top:6px;width:120px;padding:0"><div class="abs" style="left:0;top:0;width:33px;height:26px;text-align:center;line-height:26px"></div><div class="abs" style="left:33px;top:0;width:21px;height:26px"><div class="spin"><svg style="top:3px" viewBox="0 0 10 6"><path d="M1 5 L5 1 L9 5" fill="none" stroke="#909399" stroke-width="1"/></svg><svg style="top:16px" viewBox="0 0 10 6"><path d="M1 1 L5 5 L9 1" fill="none" stroke="#909399" stroke-width="1"/></svg></div></div><div class="abs" style="left:54px;top:0;width:64px;height:26px;background:#f5f7fa;border-left:1px solid #e4e7ed;line-height:26px;color:#c0c4cc;padding-left:4px;text-align:left">選択<svg class="cv" style="left:39px;top:10px" viewBox="0 0 12 7"><path d="M1 1 L6 6 L11 1" fill="none" stroke="#d5d8de" stroke-width="1.1"/></svg></div></div></div>
<div class="gc " style="left:1099px;top:277px;width:55px"><div class="gear"><svg viewBox="0 0 16 16"><path d="M6.76 3.36 L6.80 1.20 L9.20 1.20 L9.24 3.36 L10.40 3.84 L11.96 2.35 L13.65 4.04 L12.16 5.60 L12.64 6.76 L14.80 6.80 L14.80 9.20 L12.64 9.24 L12.16 10.40 L13.65 11.96 L11.96 13.65 L10.40 12.16 L9.24 12.64 L9.20 14.80 L6.80 14.80 L6.76 12.640 L5.60 12.16 L4.04 13.65 L2.35 11.96 L3.84 10.40 L3.36 9.24 L1.20 9.20 L1.20 6.80 L3.36 6.76 L3.84 5.60 L2.35 4.04 L4.04 2.35 L5.60 3.84Z" fill="#cdcdcd" stroke="#8b8b8b" stroke-width=".9" stroke-linejoin="round"/><circle cx="8" cy="8" r="2.5" fill="#b5b5b5" stroke="#858585" stroke-width=".9"/><circle cx="8" cy="8" r="1.1" fill="#f4f7fb"/></svg></div></div></div>
<div id="iscroll"><div class="th"></div><div class="tu" style="left:5px;top:7px;border-bottom-color:#a3a3a3"></div><div class="td" style="left:5px;top:489px"></div></div>
</div></div>
<div class="sec" style="top:664px">レイアウト</div>
<div class="pill" style="left:371px;top:709px;width:128px"></div>
<div class="pill" style="left:513px;top:709px;width:181px"></div>
<div id="oscroll"><div class="th"></div><div class="tu" style="left:5px;top:7px"></div><div class="td" style="left:5px;top:641px"></div></div>
<!--/MAIN-->
</div></div>
<!--OVER-->
<div id="bbar">
<div class="bb" style="left:411px;width:118px;background:#409eff">プレビュー</div>
<div class="bb" style="left:543px;width:104px;background:#a0cfff;font-weight:bold">複写新規</div>
<div class="bb" style="left:661px;width:118px;background:#5fbb37;font-weight:bold;letter-spacing:11px;text-indent:11px">保存</div>
<div class="bb" style="left:793px;width:118px;background:#f3d19e;font-weight:bold;letter-spacing:11px;text-indent:11px">削除</div>
</div>
<div id="callout">
<svg class="abs" style="left:905px;top:190px" width="766" height="170" viewBox="905 190 766 170">
<defs><filter id="sh" x="-5%" y="-10%" width="110%" height="130%"><feGaussianBlur stdDeviation="2.5"/></filter></defs>
<path d="M926.500 209.200 H1651.500 V303.300 H1230 L1008.500 344.500 L1046.500 303.300 H926.500 Z" transform="translate(1.5,2.5)" fill="#000" opacity=".25" filter="url(#sh)"/>
<path d="M926.500 209.200 H1651.500 V303.300 H1230 L1008.500 344.500 L1046.500 303.300 H926.500 Z" fill="#fff" stroke="#e17d38" stroke-width="2.700" stroke-linejoin="miter"/>
</svg>
<div class="ctxt" style="top:233px">データソースを設定すると、データソースの各項目に対して出力設定を行うための一覧が表示されます</div>
<div class="ctxt" style="top:258px;letter-spacing:-.075px">各項目の表示・非表示、表示フォーマット、ソート指定、集計種別などの設定を行うことができます</div>
</div>
<!--/OVER-->
</body>
</html>
